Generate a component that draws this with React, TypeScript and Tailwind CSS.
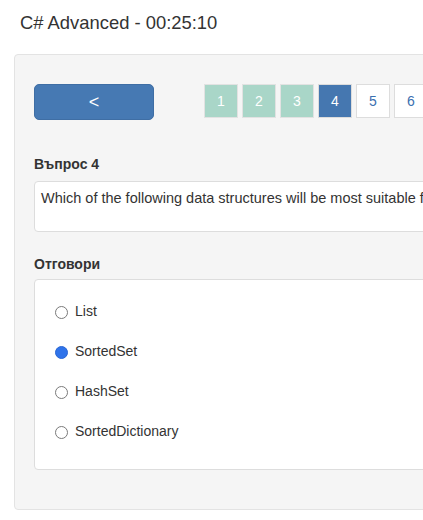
import { useState } from 'react';

const pages = [1, 2, 3, 4, 5, 6, 7, 8, 9, 10];
const answered = [1, 2, 3];
const current = 4;
const answers = ['List', 'SortedSet', 'HashSet', 'SortedDictionary'];

function Radio({ checked }: { checked: boolean }) {
  return checked ? (
    <span className="block w-[13px] h-[13px] rounded-full bg-[#2f73ea] border border-[#2a66d3]" />
  ) : (
    <span className="block w-[13px] h-[13px] rounded-full bg-white border border-[#7a7a7a]" />
  );
}

export default function App() {
  const [selected, setSelected] = useState('SortedSet');

  return (
    <div className="w-[423px] h-[520px] overflow-hidden bg-white text-[#333] font-['Liberation_Sans',Arial,sans-serif]">
      <h1 className="pt-[13px] pl-5 text-[18.4px] leading-[20px]">C# Advanced - 00:25:10</h1>

      <div className="ml-[14px] mt-[21px] w-[800px] border border-[#e3e3e3] rounded bg-[#f5f5f5] pl-[19px] pt-[29px] pb-[39px]">
        <div className="flex items-start">
          <button className="w-[120px] h-[36px] rounded-[5px] bg-[#4679b3] border border-[#3f6ea4] text-white text-[18px] leading-none">
            &lt;
          </button>
          <div className="flex gap-[4px] ml-[50px]">
            {pages.map((p) => {
              const done = answered.includes(p);
              const active = p === current;
              return (
                <div
                  key={p}
                  className={
                    active
                      ? 'w-[34px] h-[34px] flex items-center justify-center text-[14px] border border-[#dcdcdc] bg-[#4577b0] text-white'
                      : done
                        ? 'w-[34px] h-[34px] flex items-center justify-center text-[14px] border border-[#e2e2e2] bg-[#a9d6c8] text-white'
                        : 'w-[34px] h-[34px] flex items-center justify-center text-[14px] border border-[#dddddd] bg-white text-[#3b70b0]'
                  }
                >
                  {p}
                </div>
              );
            })}
          </div>
        </div>

        <h2 className="mt-[34px] text-[14px] leading-[20px] font-bold">Въпрос 4</h2>
        <div className="mt-[7px] h-[51px] bg-white border border-[#dddddd] rounded pl-[6px] pt-[6px] text-[14.5px] leading-[20px] whitespace-nowrap">
          Which of the following data structures will be most suitable for storing unique elements in sorted order?
        </div>

        <h2 className="mt-[22px] text-[14px] leading-[20px] font-bold">Отговори</h2>
        <div className="mt-[5px] bg-white border border-[#dddddd] rounded pt-[11px] pb-[18px] pl-[20px]">
          {answers.map((a) => (
            <label
              key={a}
              onClick={() => setSelected(a)}
              className="flex items-center h-[40px] text-[14px] leading-[20px] cursor-pointer"
            >
              <span className="mt-[2px]">
                <Radio checked={selected === a} />
              </span>
              <span className="ml-[7px]">{a}</span>
            </label>
          ))}
        </div>
      </div>
    </div>
  );
}
